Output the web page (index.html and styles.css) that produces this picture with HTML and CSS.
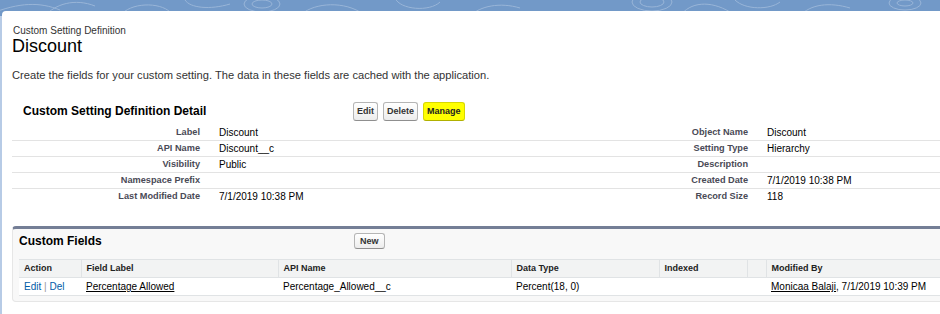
FILE: index.html
```html
<!DOCTYPE html>
<html>
	<head>
        <meta charset="UTF-8" />
        <meta name="viewport" content="width=device-width" />
		<title>Custom Setting Definition: Discount</title>
		<link rel="stylesheet" href="styles.css">
	</head>
	<body>
        <div class="banner">
            <svg width="940" height="16" viewBox="0 0 940 16">
                <g fill="none" stroke="#b9cde6" stroke-width="1" opacity="0.55">
                    <path d="M-10 14 C 20 2, 40 2, 60 10" />
                    <path d="M45 16 C 55 4, 75 -2, 95 6" />
                    <path d="M120 16 C 130 2, 160 2, 170 12" />
                    <path d="M185 0 C 190 8, 210 10, 230 4" />
                    <ellipse cx="262" cy="4" rx="18" ry="8" />
                    <ellipse cx="262" cy="4" rx="10" ry="4" />
                    <path d="M300 16 C 310 4, 340 0, 360 12" />
                    <path d="M395 -2 C 400 10, 430 12, 440 2" />
                    <path d="M470 16 C 480 6, 500 2, 520 8" />
                    <ellipse cx="652" cy="2" rx="20" ry="9" />
                    <ellipse cx="652" cy="2" rx="12" ry="5" />
                    <path d="M680 16 C 690 2, 710 0, 730 12" />
                    <path d="M735 0 C 745 10, 770 10, 780 2" />
                    <path d="M800 16 C 810 4, 830 2, 850 8" />
                    <ellipse cx="905" cy="3" rx="16" ry="7" />
                    <ellipse cx="905" cy="3" rx="8" ry="3" />
                </g>
            </svg>
        </div>

        <div class="card">
            <div class="page-type">Custom Setting Definition</div>
            <h1 class="page-title">Discount</h1>
            <p class="intro">Create the fields for your custom setting. The data in these fields are cached with the application.</p>

            <div class="detail">
                <div class="detail-head">
                    <h2>Custom Setting Definition Detail</h2>
                    <div class="btns">
                        <input class="btn" type="button" value="Edit" />
                        <input class="btn" type="button" value="Delete" />
                        <input class="btn btn-hl" type="button" value="Manage" />
                    </div>
                </div>
                <table class="detail-list">
                    <colgroup>
                        <col class="c-label" />
                        <col class="c-data" />
                        <col class="c-label2" />
                        <col />
                    </colgroup>
                    <tr>
                        <td class="label">Label</td><td class="data">Discount</td>
                        <td class="label">Object Name</td><td class="data">Discount</td>
                    </tr>
                    <tr>
                        <td class="label">API Name</td><td class="data">Discount__c</td>
                        <td class="label">Setting Type</td><td class="data">Hierarchy</td>
                    </tr>
                    <tr>
                        <td class="label">Visibility</td><td class="data">Public</td>
                        <td class="label">Description</td><td class="data"></td>
                    </tr>
                    <tr>
                        <td class="label">Namespace Prefix</td><td class="data"></td>
                        <td class="label">Created Date</td><td class="data">7/1/2019 10:38 PM</td>
                    </tr>
                    <tr class="last">
                        <td class="label">Last Modified Date</td><td class="data">7/1/2019 10:38 PM</td>
                        <td class="label">Record Size</td><td class="data">118</td>
                    </tr>
                </table>
            </div>

            <div class="related">
                <div class="related-head">
                    <h3>Custom Fields</h3>
                    <input class="btn btn-small" type="button" value="New" />
                </div>
                <table class="list">
                    <colgroup>
                        <col style="width: 62px" />
                        <col style="width: 197px" />
                        <col style="width: 233px" />
                        <col style="width: 148px" />
                        <col style="width: 88px" />
                        <col style="width: 19px" />
                        <col />
                    </colgroup>
                    <tr class="head">
                        <th>Action</th>
                        <th>Field Label</th>
                        <th>API Name</th>
                        <th>Data Type</th>
                        <th>Indexed</th>
                        <th></th>
                        <th>Modified By</th>
                    </tr>
                    <tr>
                        <td><a class="act" href="#">Edit</a> <span class="sep">|</span> <a class="act" href="#">Del</a></td>
                        <td><a class="rec" href="#">Percentage Allowed</a></td>
                        <td>Percentage_Allowed__c</td>
                        <td>Percent(18, 0)</td>
                        <td></td>
                        <td></td>
                        <td><a class="rec" href="#">Monicaa Balaji</a>, 7/1/2019 10:39 PM</td>
                    </tr>
                </table>
            </div>
        </div>
	</body>
</html>
```

FILE: styles.css
```css
* {
    outline: none;
}

body {
    margin: 0;
    width: 100vw;
    height: 100vh;
    overflow: hidden;
    background-color: #b7cbe6;
    font-family: "Liberation Sans", Arial, sans-serif;
    color: #000;
}

.banner {
    height: 16px;
    margin-bottom: -5px;
    background-color: #7299c8;
    overflow: hidden;
}

.banner svg {
    display: block;
}

.card {
    position: relative;
    margin-left: 2px;
    margin-right: -20px;
    height: 320px;
    padding: 14px 0 0 10px;
    background-color: #fff;
    border-radius: 4px 4px 0 0;
}

.page-type {
    font-size: 10px;
    line-height: 12px;
    color: #333;
    padding-left: 1px;
}

.page-title {
    margin: 0;
    font-size: 18px;
    line-height: 18px;
    font-weight: normal;
    color: #000;
}

.intro {
    margin: 13px 0 0;
    font-size: 11.15px;
    line-height: 14px;
    color: #333;
}

/* detail block */

.detail {
    margin-top: 18px;
}

.detail-head {
    display: flex;
    align-items: center;
    height: 22px;
    padding-left: 11px;
    margin-bottom: 3px;
}

.detail-head h2 {
    width: 330px;
    margin: 0;
    font-size: 12px;
    font-weight: bold;
    color: #000;
}

.btns {
    display: flex;
    gap: 5px;
}

.btn {
    height: 19px;
    padding: 0 3px;
    margin: 0;
    font-family: "Liberation Sans", Arial, sans-serif;
    font-size: 9px;
    font-weight: bold;
    color: #333;
    background: linear-gradient(#ffffff, #ededed);
    border: 1px solid #b5b5b5;
    border-bottom-color: #8f8f8f;
    border-radius: 3px;
    cursor: pointer;
}

.btn-hl {
    background: #ffff00;
    border-color: #d8d800;
    border-bottom-color: #b0b000;
    color: #222;
}

.btn-small {
    height: 16px;
    padding: 0 5px;
}

.detail-list {
    width: 100%;
    border-collapse: collapse;
    table-layout: fixed;
}

.c-label {
    width: 196px;
}

.c-data {
    width: 340px;
}

.c-label2 {
    width: 208px;
}

.detail-list td {
    height: 15px;
    padding: 0;
    border-bottom: 1px solid #e3e3e3;
    line-height: 15px;
}

.detail-list tr.last td {
    border-bottom: none;
}

.detail-list .label {
    text-align: right;
    padding-right: 8px;
    font-size: 9.2px;
    font-weight: bold;
    color: #4a4a56;
}

.detail-list .data {
    padding-left: 11px;
    font-size: 10px;
    color: #000;
}

/* related list */

.related {
    margin-top: 22px;
    padding: 0 0 5px 6px;
    background-color: #f8f8f8;
    border: 1px solid #e6e6e6;
    border-top: 3px solid #747e96;
    border-radius: 4px 4px 0 4px;
}

.related-head {
    display: flex;
    align-items: center;
    height: 24px;
    padding-bottom: 6px;
}

.related-head h3 {
    width: 335px;
    margin: 0;
    font-size: 12px;
    font-weight: bold;
    color: #000;
}

.list {
    width: 100%;
    border-collapse: collapse;
    table-layout: fixed;
    background-color: #fff;
}

.list th,
.list td {
    padding: 0 5px;
    height: 17px;
    line-height: 17px;
    text-align: left;
    white-space: nowrap;
    border-top: 1px solid #e0e3e5;
    border-bottom: 1px solid #e0e3e5;
}

.list th {
    font-size: 9px;
    font-weight: bold;
    color: #222;
    background-color: #f2f3f3;
    border-left: 1px solid #e0e3e5;
}

.list th:first-child {
    border-left: none;
}

.list td {
    font-size: 10px;
    color: #000;
}

.act {
    color: #015ba7;
    text-decoration: none;
}

.sep {
    color: #999;
}

.rec {
    color: #000;
    text-decoration: underline;
}
```
